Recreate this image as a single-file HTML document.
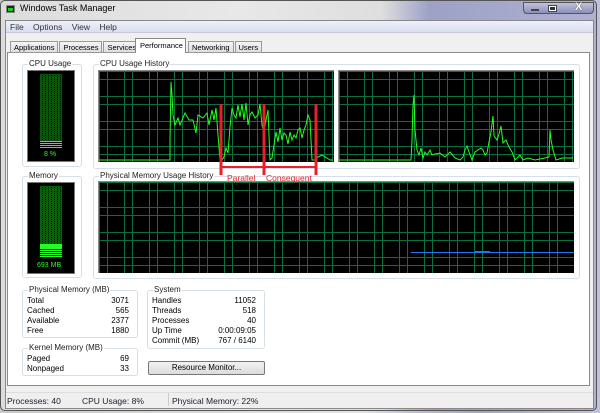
<!DOCTYPE html>
<html><head><style>
*{margin:0;padding:0;box-sizing:border-box}
body{width:600px;height:413px;overflow:hidden;background:#fff;font-family:"Liberation Sans",sans-serif;font-size:8px;color:#000;position:relative}
.a{position:absolute}
.grid{background-color:#000;background-image:
linear-gradient(90deg,#0a7040 1px,transparent 1px),linear-gradient(90deg,#0a7040 1px,transparent 1px),
linear-gradient(#0a7040 1px,transparent 1px),linear-gradient(#0a7040 1px,transparent 1px);
background-size:25px 100%,25px 100%,100% 25px,100% 25px;background-position:0 0,8px 0,0 0,0 8px;border-top:1px solid #888;border-left:1px solid #888}
.gb{position:absolute;border:1px solid #d5dfe5;border-radius:3px}
.gb>span{position:absolute;top:-6px;left:5px;background:#fff;padding:0 1px;font-size:8px;line-height:10px;color:#222}
.row{position:absolute;left:4px;right:8px;height:10px;line-height:10px;font-size:8px}
.row b{font-weight:normal;float:right}
</style></head><body>
<div class="a" style="left:0;top:0;width:600px;height:413px;background:linear-gradient(90deg,#c8c8c8,#d8d8d8 30%,#e4e4e4 60%,#bfc2d6 68%,#a0a4c8 80%,#c0c3d8);"></div>
<div class="a" style="left:0;top:0;width:597px;height:411px;border:1px solid #555;border-radius:5px;background:linear-gradient(90deg,#dcdcdc,#e8e8e8 40%,#dedede 64%,#9da1c6 72%,#aeb1d0 100%)"></div>
<div class="a" style="left:6px;top:5px;width:9px;height:8px;background:#222;border:1px solid #888"></div>
<div class="a" style="left:8px;top:8px;width:5px;height:3px;background:#2c2"></div>
<div class="a" style="left:20px;top:3px;font-size:9px">Windows Task Manager</div>
<div class="a" style="left:523px;top:2px;width:71px;height:12px;border:1px solid #555;border-radius:0 0 4px 4px;background:linear-gradient(#c0c2dc,#8d90b8)"></div>
<div class="a" style="left:531px;top:9px;width:8px;height:2px;background:#fff;border:1px solid #444"></div>
<div class="a" style="left:548px;top:5px;width:9px;height:7px;border:1px solid #444;background:#fff"></div>
<div class="a" style="left:550px;top:7px;width:5px;height:3px;background:#333"></div>
<div class="a" style="left:575px;top:1px;color:#fff;font-size:11px;font-weight:bold;text-shadow:0 0 1px #000">X</div>
<div class="a" style="left:5px;top:20px;width:589px;height:389px;background:#f0f0f0;border:1px solid #888"></div>
<div class="a" style="left:6px;top:21px;width:587px;height:12px;background:linear-gradient(#eef0fa,#d9def0);border-bottom:1px solid #c8cadc"></div>
<div class="a" style="left:10px;top:22px;font-size:8.5px;color:#333;word-spacing:7px">File Options View Help</div>
<div class="a" style="left:7px;top:52px;width:583px;height:334px;background:#fff;border:1px solid #8a8a8a"></div>
<div class="a" style="left:10px;top:41px;height:12px;display:flex;font-size:7.5px">
<div style="border:1px solid #999;background:linear-gradient(#f4f4f4,#dedede);padding:1px 3px;margin-right:1px">Applications</div>
<div style="border:1px solid #999;background:linear-gradient(#f4f4f4,#dedede);padding:1px 3px;margin-right:1px">Processes</div>
<div style="border:1px solid #999;background:linear-gradient(#f4f4f4,#dedede);padding:1px 3px">Services</div>
</div>
<div class="a" style="left:135px;top:38px;width:51px;height:15px;background:#fff;border:1px solid #888;border-bottom:none;font-size:7.5px;padding:2px 4px">Performance</div>
<div class="a" style="left:188px;top:41px;height:12px;display:flex;font-size:7.5px">
<div style="border:1px solid #999;background:linear-gradient(#f4f4f4,#dedede);padding:1px 3px;margin-right:1px">Networking</div>
<div style="border:1px solid #999;background:linear-gradient(#f4f4f4,#dedede);padding:1px 3px">Users</div>
</div>
<div class="gb" style="left:22px;top:64px;width:60px;height:103px"><span>CPU Usage</span></div>
<div class="a" style="left:27px;top:70px;width:48px;height:92px;background:#000;border:1px solid #777"></div>
<div class="a" style="left:40px;top:74px;width:22px;height:68px;background:repeating-linear-gradient(#0a5a0a 0 1px,transparent 1px 2px),repeating-linear-gradient(90deg,#0a6a0a 0 2px,transparent 2px 3px);opacity:.9"></div>
<div class="a" style="left:40px;top:141px;width:22px;height:7px;background:repeating-linear-gradient(#2f2 0 1px,transparent 1px 2px)"></div>
<div class="a" style="left:44px;top:151px;color:#2f2;font-size:7px">8 %</div>
<div class="gb" style="left:22px;top:176px;width:60px;height:102px"><span>Memory</span></div>
<div class="a" style="left:27px;top:182px;width:48px;height:92px;background:#000;border:1px solid #777"></div>
<div class="a" style="left:40px;top:186px;width:22px;height:58px;background:repeating-linear-gradient(#0a5a0a 0 1px,transparent 1px 2px),repeating-linear-gradient(90deg,#0a6a0a 0 2px,transparent 2px 3px)"></div>
<div class="a" style="left:40px;top:244px;width:22px;height:5px;background:#2f2"></div>
<div class="a" style="left:40px;top:250px;width:22px;height:8px;background:repeating-linear-gradient(#2f2 0 1px,transparent 1px 2px)"></div>
<div class="a" style="left:37px;top:262px;color:#2f2;font-size:7px">693 MB</div>
<div class="gb" style="left:93px;top:64px;width:487px;height:105px"><span>CPU Usage History</span></div>
<div class="a grid" style="left:98px;top:70px;width:236px;height:92px"></div>
<div class="a grid" style="left:338px;top:70px;width:236px;height:92px"></div>
<div class="gb" style="left:93px;top:176px;width:487px;height:103px"><span>Physical Memory Usage History</span></div>
<div class="a grid" style="left:98px;top:181px;width:476px;height:92px"></div>
<div class="a" style="left:411px;top:252px;width:163px;height:1px;background:#1a7af0"></div>
<div class="a" style="left:475px;top:251px;width:15px;height:1px;background:#1a7af0"></div>
<svg class="a" style="left:0;top:0;z-index:5" width="600" height="413">
<polyline fill="none" stroke="#2f2" stroke-width="1" points="99,160 170,160 170,140 171,82 172,95 173,115 175,125 178,118 180,125 185,113 189,120 193,120 196,133 198,115 203,118 207,113 209,125 212,110 214,120 216,108 218,135 220,160 222,160 224,157 226,148 228,153 230,127 232,108 234,115 236,118 238,105 240,117 242,104 244,120 246,103 248,125 250,115 252,112 255,118 258,115 260,104 262,125 264,133 266,120 268,110 270,160 272,158 274,145 276,132 278,142 280,128 282,140 284,133 286,135 288,144 290,132 292,140 294,135 296,138 298,130 300,128 302,138 304,130 306,125 308,115 310,120 312,160 315,160 318,157 322,155 330,160 333,160"/>
<polyline fill="none" stroke="#2f2" stroke-width="1" points="339,160 411,160 412,140 413,105 414,95 415,130 417,150 419,155 421,148 423,158 425,152 427,155 430,150 432,155 435,154 440,153 445,157 450,152 455,158 460,160 463,157 465,150 467,146 469,152 472,160 475,152 478,150 481,148 483,150 485,155 487,153 489,142 491,132 493,116 494,136 497,140 499,134 501,126 503,143 506,140 509,147 512,152 515,160 520,155 523,160 528,158 535,160 545,158 549,157 550,130 551,140 553,150 556,160 562,158 573,158"/>
<g stroke="#e8202a" stroke-width="3" fill="none">
<line x1="221" y1="104" x2="221" y2="175"/><line x1="264" y1="104" x2="264" y2="175"/><line x1="316" y1="104" x2="316" y2="175"/>
<line x1="222" y1="167" x2="263" y2="167" stroke-width="2"/><line x1="265" y1="167" x2="315" y2="167" stroke-width="2"/>
</g>
<text x="227" y="181" fill="#e8202a" font-size="8.5" font-family="Liberation Sans">Parallel</text>
<text x="266" y="181" fill="#e8202a" font-size="8.5" font-family="Liberation Sans">Consequent</text>
</svg>
<div class="gb" style="left:22px;top:290px;width:116px;height:48px"><span>Physical Memory (MB)</span>
<div class="row" style="top:5px">Total<b>3071</b></div><div class="row" style="top:15px">Cached<b>565</b></div><div class="row" style="top:25px">Available<b>2377</b></div><div class="row" style="top:35px">Free<b>1880</b></div></div>
<div class="gb" style="left:22px;top:348px;width:116px;height:28px"><span>Kernel Memory (MB)</span>
<div class="row" style="top:5px">Paged<b>69</b></div><div class="row" style="top:15px">Nonpaged<b>33</b></div></div>
<div class="gb" style="left:147px;top:290px;width:118px;height:59px"><span>System</span>
<div class="row" style="top:5px">Handles<b>11052</b></div><div class="row" style="top:15px">Threads<b>518</b></div><div class="row" style="top:25px">Processes<b>40</b></div><div class="row" style="top:35px">Up Time<b>0:00:09:05</b></div><div class="row" style="top:45px">Commit (MB)<b>767 / 6140</b></div></div>
<div class="a" style="left:148px;top:361px;width:117px;height:14px;border:1px solid #777;border-radius:2px;background:linear-gradient(#f2f2f2,#dcdcdc);text-align:center;line-height:12px;font-size:8px">Resource Monitor...</div>
<div class="a" style="left:6px;top:392px;width:587px;height:15px;background:#f0eeee;border-top:1px solid #ddd"></div>
<div class="a" style="left:168px;top:393px;width:1px;height:13px;background:#ccc"></div>
<div class="a" style="left:7px;top:396px;font-size:8.5px;color:#223">Processes: 40</div>
<div class="a" style="left:82px;top:396px;font-size:8.5px;color:#223">CPU Usage: 8%</div>
<div class="a" style="left:172px;top:396px;font-size:8.5px;color:#223">Physical Memory: 22%</div>
</body></html>
